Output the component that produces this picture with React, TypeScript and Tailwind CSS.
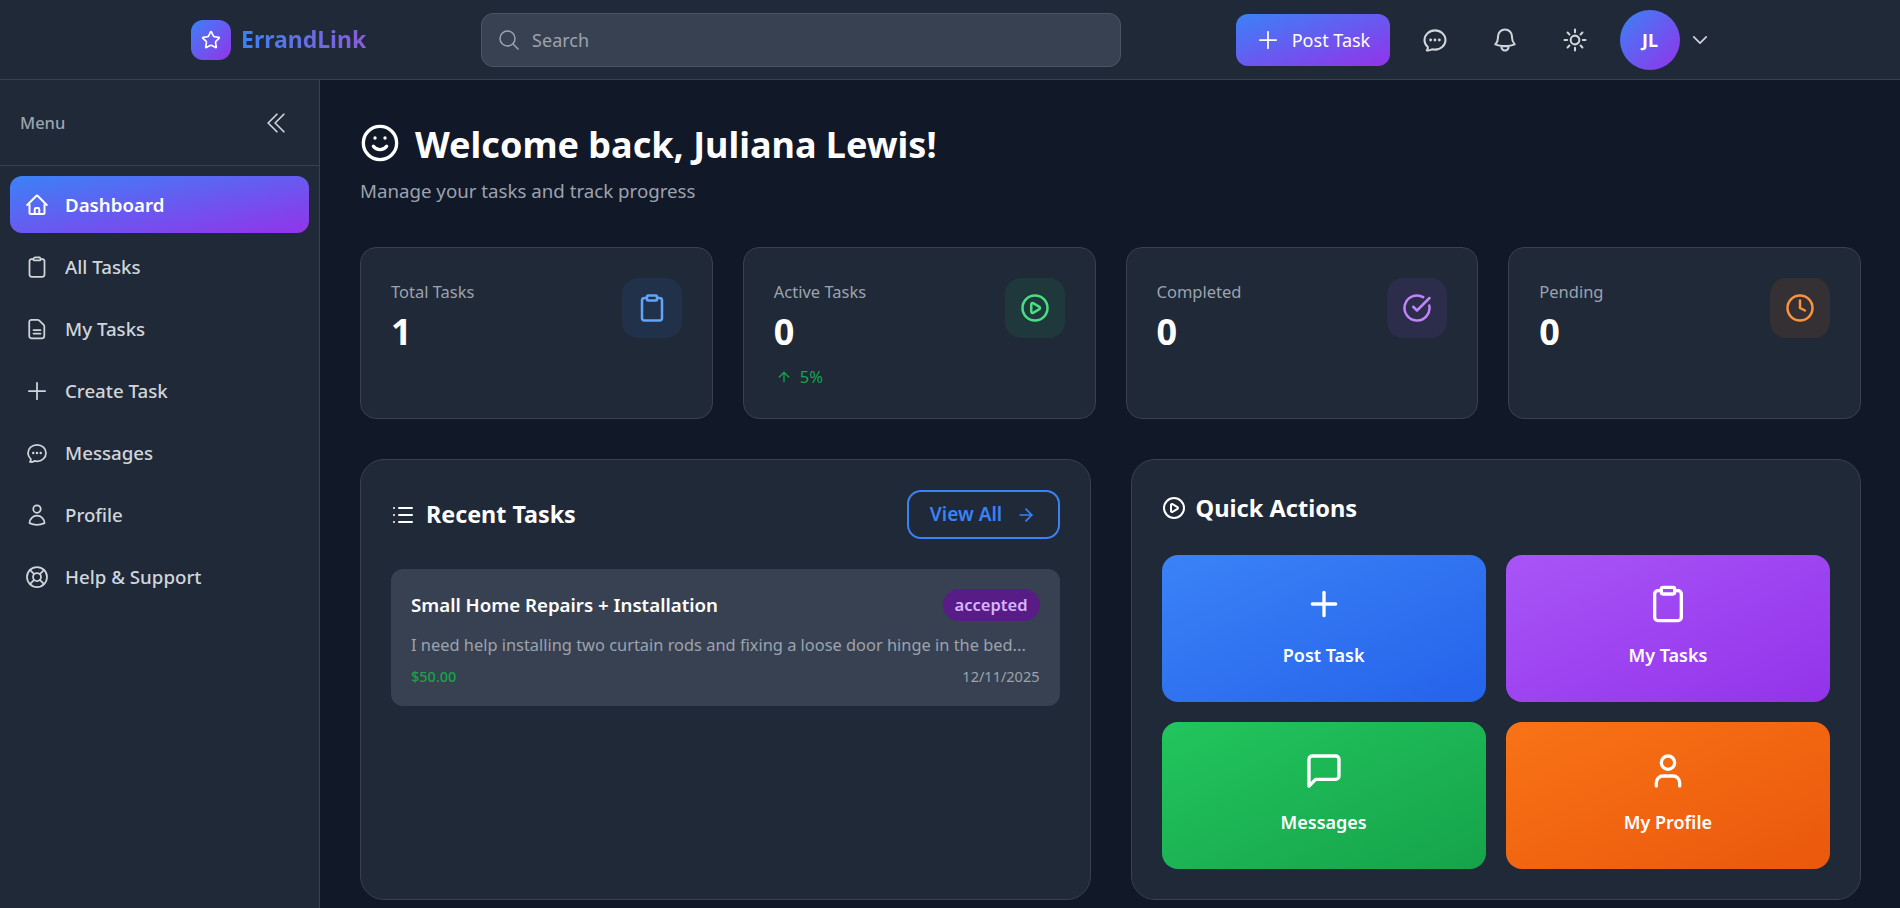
import React from 'react';
import { Star, Plus, Smile, CirclePlay, CircleCheckBig, Clock, ArrowUp, ArrowRight, List, Clipboard, User, LifeBuoy } from 'lucide-react';
import {
  HiOutlineMagnifyingGlass,
  HiOutlineChatBubbleOvalLeftEllipsis,
  HiOutlineBell,
  HiOutlineSun,
  HiOutlineChevronDown,
  HiOutlineChevronDoubleLeft,
  HiOutlineHome,
  HiOutlineClipboard,
  HiOutlineUser,
} from 'react-icons/hi2';

const font = { fontFamily: '"Noto Sans", sans-serif' };

const ThinPlus: React.FC = () => <Plus className="w-7 h-7 -mx-0.5" strokeWidth={1.5} />;

const SpeechBubble: React.FC = () => (
  <svg viewBox="0 0 24 24" className="w-10 h-10" fill="none" stroke="currentColor" strokeWidth={2} strokeLinecap="round" strokeLinejoin="round">
    <path d="M21 15a2 2 0 0 1-2 2H7l-4 4V5a2 2 0 0 1 2-2h14a2 2 0 0 1 2 2z" />
  </svg>
);

const DocumentIcon: React.FC = () => (
  <svg viewBox="0 0 24 24" className="w-6 h-6" fill="none" stroke="currentColor" strokeWidth={1.75} strokeLinecap="round" strokeLinejoin="round">
    <path d="M6.5 2.75h6.2a2 2 0 0 1 1.4.6l4.6 4.6a2 2 0 0 1 .6 1.4V19a2.25 2.25 0 0 1-2.25 2.25h-10.5A2.25 2.25 0 0 1 4.25 19V5a2.25 2.25 0 0 1 2.25-2.25z" />
    <path d="M8.5 13h7M8.5 16.5h7" />
  </svg>
);

const navigation = [
  { name: 'Dashboard', icon: <HiOutlineHome className="w-6 h-6" strokeWidth={2} />, active: true },
  { name: 'All Tasks', icon: <HiOutlineClipboard className="w-6 h-6" strokeWidth={1.75} /> },
  { name: 'My Tasks', icon: <DocumentIcon /> },
  { name: 'Create Task', icon: <ThinPlus /> },
  { name: 'Messages', icon: <HiOutlineChatBubbleOvalLeftEllipsis className="w-6 h-6" strokeWidth={1.75} /> },
  { name: 'Profile', icon: <HiOutlineUser className="w-6 h-6" strokeWidth={1.75} /> },
  { name: 'Help & Support', icon: <LifeBuoy className="w-6 h-6" strokeWidth={1.75} /> },
];

const stats = [
  { label: 'Total Tasks', value: '1', icon: Clipboard, box: 'bg-[#3b82f6]/10', color: 'text-[#60a5fa]' },
  { label: 'Active Tasks', value: '0', icon: CirclePlay, box: 'bg-[#22c55e]/10', color: 'text-[#4ade80]', trend: '5%' },
  { label: 'Completed', value: '0', icon: CircleCheckBig, box: 'bg-[#a855f7]/10', color: 'text-[#c084fc]' },
  { label: 'Pending', value: '0', icon: Clock, box: 'bg-[#f97316]/10', color: 'text-[#fb923c]' },
];

const actions = [
  { name: 'Post Task', icon: <Plus className="w-10 h-10" />, color: 'from-[#3b82f6] to-[#2563eb]' },
  { name: 'My Tasks', icon: <Clipboard className="w-10 h-10" />, color: 'from-[#a855f7] to-[#9333ea]' },
  { name: 'Messages', icon: <SpeechBubble />, color: 'from-[#22c55e] to-[#16a34a]' },
  { name: 'My Profile', icon: <User className="w-10 h-10" />, color: 'from-[#f97316] to-[#ea580c]' },
];

const Header: React.FC = () => (
  <header className="h-20 bg-[#1f2937] border-b border-[#374151]">
    <div className="max-w-[1520px] h-full mx-auto flex items-center">
      <div className="ml-px flex items-center gap-2.5 shrink-0">
        <div className="w-10 h-10 rounded-xl bg-linear-to-br/srgb from-[#3b82f6] to-[#9333ea] flex items-center justify-center">
          <Star className="w-5 h-5 text-white" />
        </div>
        <span className="text-[23px] font-bold bg-linear-to-r/srgb from-[#3b82f6] to-[#8b5cd6] bg-clip-text text-transparent">
          ErrandLink
        </span>
      </div>

      <div className="w-[640px] h-[54px] mx-auto flex items-center gap-[11px] pl-[15px] rounded-xl bg-[#374151] border border-[#4b5563]">
        <HiOutlineMagnifyingGlass className="w-6 h-6 text-[#9ca3af]" />
        <span className="text-lg text-[#9ca3af]">Search</span>
      </div>

      <div className="flex items-center gap-5 shrink-0">
        <button className="w-[154px] h-[52px] flex items-center justify-center gap-3 rounded-xl bg-linear-to-br/srgb from-[#3b82f6] to-[#9333ea] text-white text-lg">
          <ThinPlus />
          Post Task
        </button>
        <HiOutlineChatBubbleOvalLeftEllipsis className="w-[50px] h-7 text-[#d1d5db]" strokeWidth={1.75} />
        <HiOutlineBell className="w-[50px] h-7 text-[#d1d5db]" strokeWidth={1.75} />
        <HiOutlineSun className="w-[50px] h-7 text-[#d1d5db]" strokeWidth={1.75} />
        <div className="flex items-center gap-2.5">
          <div className="w-[60px] h-[60px] rounded-full bg-linear-to-br/srgb from-[#3b82f6] to-[#9333ea] flex items-center justify-center text-white text-lg font-bold">
            JL
          </div>
          <HiOutlineChevronDown className="w-5 h-5 text-[#d1d5db]" strokeWidth={2} />
        </div>
      </div>
    </div>
  </header>
);

const Sidebar: React.FC = () => (
  <aside className="w-80 shrink-0 bg-[#1f2937] border-r border-[#374151]">
    <div className="h-[86px] flex items-center justify-between pl-5 pr-[22px] border-b border-[#374151]">
      <span className="pt-0.5 text-[16.5px] font-medium text-[#9ca3af]">Menu</span>
      <HiOutlineChevronDoubleLeft className="w-7 h-7 mr-[7px] text-[#d1d5db]" strokeWidth={1.5} />
    </div>
    <nav className="p-2.5 flex flex-col gap-[5px]">
      {navigation.map((item) => (
        <div
          key={item.name}
          className={`h-[57px] flex items-center gap-4 px-[15px] rounded-xl text-[18.7px] ${
            item.active
              ? 'bg-linear-to-br/srgb from-[#3b82f6] to-[#9333ea] text-white font-semibold'
              : 'text-[#d1d5db] font-medium'
          }`}
        >
          {item.icon}
          <span className="pt-0.5">{item.name}</span>
        </div>
      ))}
    </nav>
  </aside>
);

const App: React.FC = () => {
  return (
    <div className="h-[908px] overflow-hidden flex flex-col bg-[#111827]" style={font}>
      <Header />
      <div className="flex flex-1 min-h-0">
        <Sidebar />
        <main className="flex-1 min-w-0 pt-10 pl-10 pr-[39px]">
          <div className="flex items-center gap-[15px] text-white">
            <Smile className="w-10 h-10 -mt-1" />
            <h1 className="text-4xl leading-[50px] font-bold">Welcome back, Juliana Lewis!</h1>
          </div>
          <p className="mt-[7px] text-[18.7px] leading-7 text-[#9ca3af]">Manage your tasks and track progress</p>

          {/* Stats */}
          <div className="mt-[42px] grid grid-cols-4 gap-[30px]">
            {stats.map((stat) => {
              const Icon = stat.icon;
              return (
                <div key={stat.label} className="h-[172px] p-[30px] flex justify-between bg-[#1f2937] border border-[#374151] rounded-2xl">
                  <div>
                    <div className="text-[16.5px] leading-7 text-[#9ca3af]">{stat.label}</div>
                    <div className="mt-1.5 text-4xl font-bold text-white">{stat.value}</div>
                    {stat.trend && (
                      <div className="mt-[13px] ml-0.5 flex items-center gap-2 text-[16.5px] text-[#16a34a]">
                        <ArrowUp className="w-4 h-4" />
                        {stat.trend}
                      </div>
                    )}
                  </div>
                  <div className={`w-[60px] h-[60px] rounded-2xl flex items-center justify-center ${stat.box}`}>
                    <Icon className={`w-[30px] h-[30px] ${stat.color}`} />
                  </div>
                </div>
              );
            })}
          </div>

          <div className="mt-10 grid grid-cols-2 gap-10">
            {/* Recent tasks */}
            <section className="h-[441px] p-[30px] bg-[#1f2937] border border-[#374151] rounded-3xl">
              <div className="flex items-center justify-between">
                <h2 className="flex items-center gap-[11px] text-[23.3px] font-bold text-white">
                  <List className="w-6 h-6" />
                  Recent Tasks
                </h2>
                <button className="w-[153px] h-[49px] flex items-center justify-center gap-[14px] rounded-[14px] border-2 border-[#3b82f6] text-[#3b82f6] text-[19px] font-semibold">
                  View All
                  <ArrowRight className="w-5 h-5" />
                </button>
              </div>
              <div className="mt-[30px] h-[137px] p-5 rounded-xl bg-[#374151]">
                <div className="flex items-center justify-between">
                  <span className="text-[18.7px] font-semibold text-white">Small Home Repairs + Installation</span>
                  <span className="px-3 h-8 flex items-center rounded-full bg-[#581c87] text-[#d8b4fe] text-[16.5px] font-semibold">accepted</span>
                </div>
                <p className="mt-3 text-[16.4px] leading-6 text-[#9ca3af] truncate">
                  I need help installing two curtain rods and fixing a loose door hinge in the bed...
                </p>
                <div className="mt-[9px] flex items-center justify-between text-[14.5px] leading-5">
                  <span className="text-[#16a34a] font-medium">$50.00</span>
                  <span className="text-[#9ca3af]">12/11/2025</span>
                </div>
              </div>
            </section>

            {/* Quick actions */}
            <section className="h-[441px] p-[30px] bg-[#1f2937] border border-[#374151] rounded-3xl">
              <h2 className="flex items-center gap-2.5 text-[23.6px] leading-9 font-bold text-white">
                <CirclePlay className="w-6 h-6" />
                Quick Actions
              </h2>
              <div className="mt-[29px] grid grid-cols-2 gap-5">
                {actions.map((action) => (
                  <div
                    key={action.name}
                    className={`h-[147px] pb-1 flex flex-col items-center justify-center gap-[17px] rounded-2xl bg-linear-to-br/srgb text-white text-lg font-semibold ${action.color}`}
                  >
                    {action.icon}
                    {action.name}
                  </div>
                ))}
              </div>
            </section>
          </div>
        </main>
      </div>
    </div>
  );
};

export default App;
